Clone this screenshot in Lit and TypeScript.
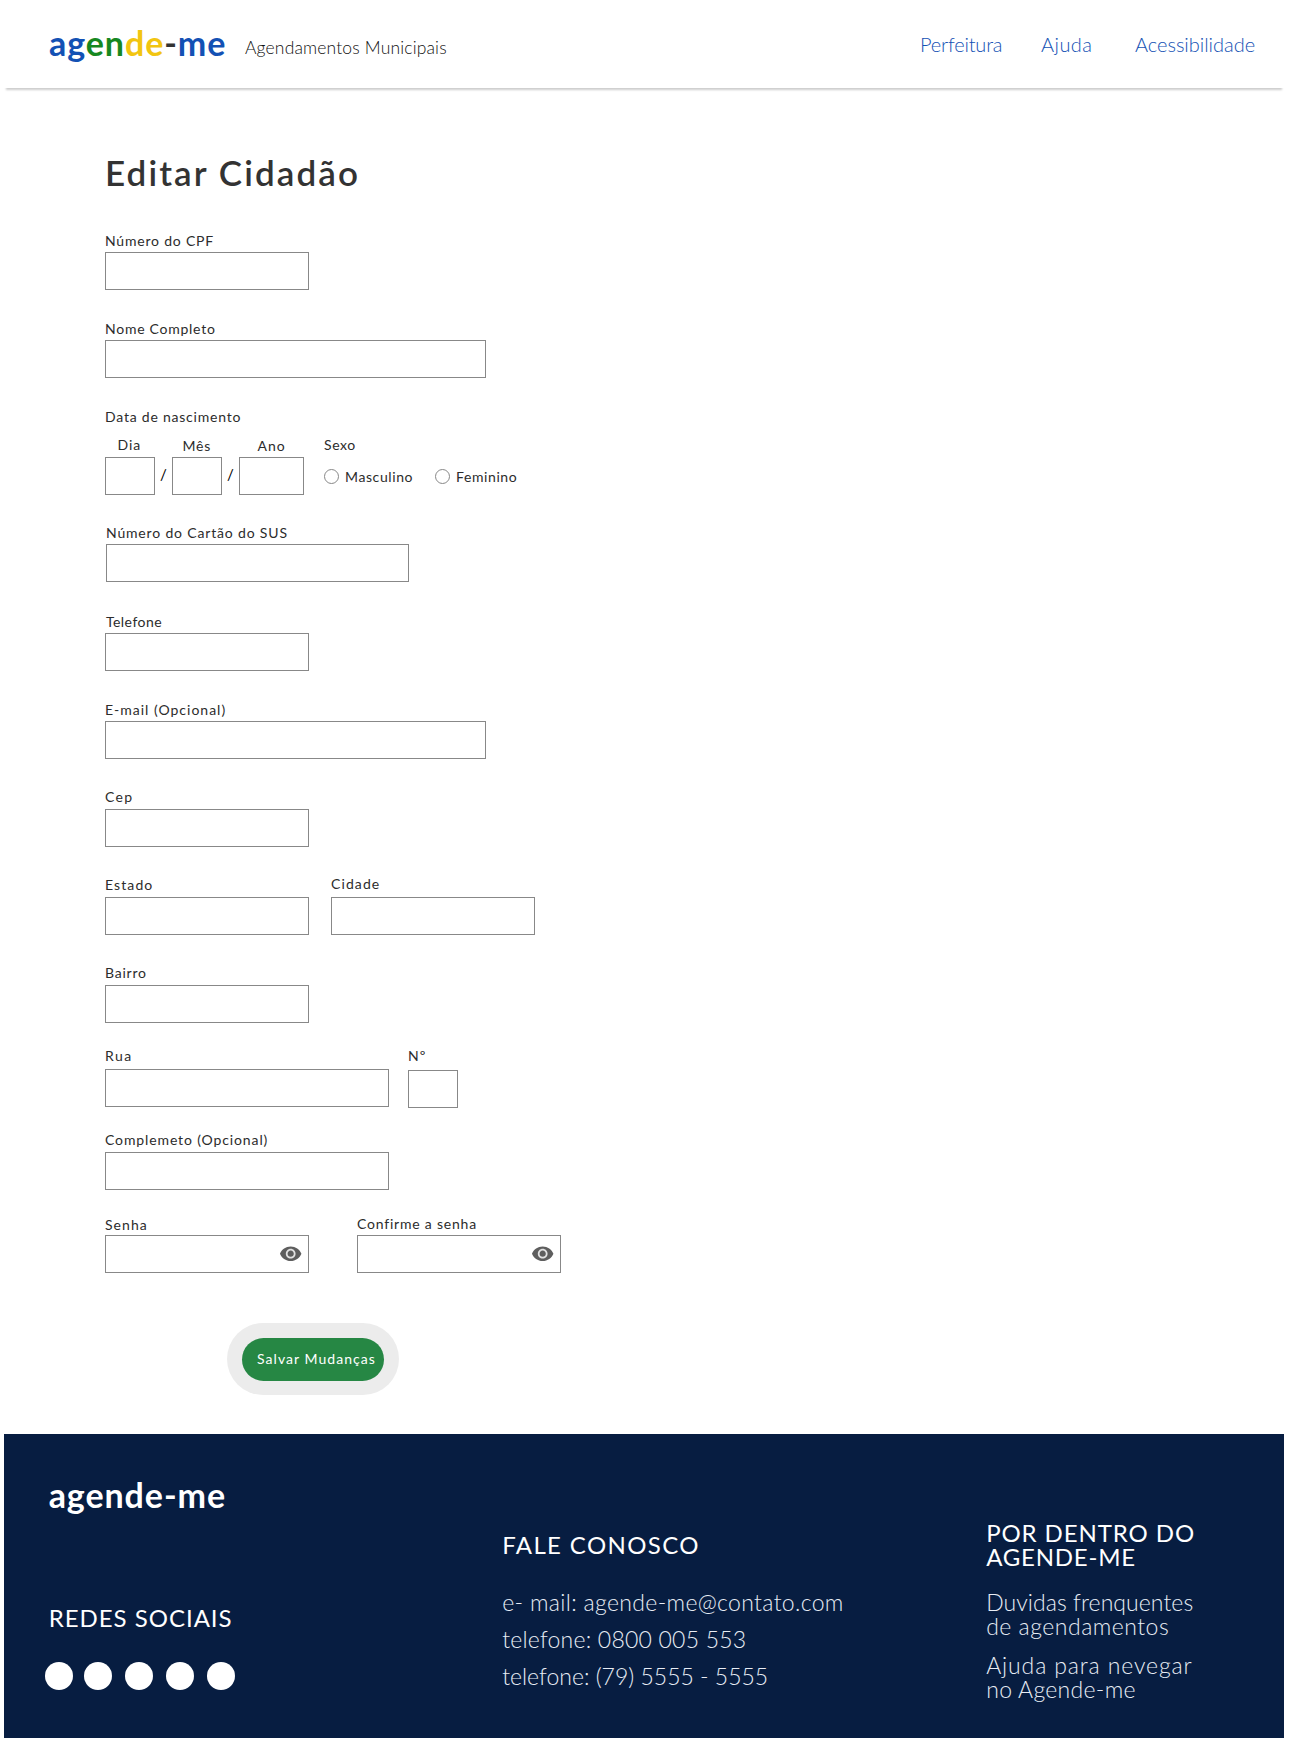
import { LitElement, html, css } from 'lit';
import { customElement, property } from 'lit/decorators.js';

const fontStack = css`Lato, "Open Sans", sans-serif`;

@customElement('eye-icon')
class EyeIcon extends LitElement {
  static styles = css`
    :host { display: block; width: 23.4px; height: 23.4px; }
    svg { display: block; width: 100%; height: 100%; }
  `;
  render() {
    return html`<svg viewBox="0 0 24 24" aria-hidden="true">
      <circle cx="12" cy="12" r="6" fill="#e2e2e2"></circle>
      <path fill="#5e5e5e" d="M12 4.5C7 4.5 2.73 7.61 1 12c1.73 4.39 6 7.5 11 7.5s9.27-3.11 11-7.5c-1.73-4.39-6-7.5-11-7.5zM12 17c-2.76 0-5-2.24-5-5s2.24-5 5-5 5 2.24 5 5-2.24 5-5 5zm0-8.2c-1.77 0-3.2 1.43-3.2 3.2s1.43 3.2 3.2 3.2 3.2-1.43 3.2-3.2-1.43-3.2-3.2-3.2z"></path>
    </svg>`;
  }
}

@customElement('form-field')
class FormField extends LitElement {
  @property() label = '';
  @property({ type: Boolean }) secret = false;
  static styles = css`
    :host { display: flex; flex-direction: column; }
    label {
      box-sizing: border-box;
      height: var(--label-h, 20px);
      padding: 1px 0 0 var(--indent, 0px);
      line-height: 16px;
      font-size: 14px;
      color: #2c2c2c;
      white-space: pre;
      letter-spacing: var(--track, 0.8px);
    }
    .box {
      display: flex;
      align-items: center;
      box-sizing: border-box;
      height: 38px;
      border: 1px solid #888;
      padding-right: 6px;
      background: #fff;
    }
    input { flex: 1; min-width: 0; border: 0; outline: 0; background: none; font: inherit; padding: 0 8px; }
  `;
  render() {
    return html`
      <label>${this.label}</label>
      <div class="box">
        <input type=${this.secret ? 'password' : 'text'} aria-label=${this.label} />
        ${this.secret ? html`<eye-icon></eye-icon>` : ''}
      </div>
    `;
  }
}

@customElement('app-header')
class AppHeader extends LitElement {
  static styles = css`
    :host {
      display: flex;
      box-sizing: border-box;
      height: 88px;
      padding: 0 30px 0 45px;
      background: #fff;
      box-shadow: 0 4px 2px -2px rgba(0, 0, 0, 0.2);
    }
    .logo { margin-top: 23px; width: 196px; font-size: 34px; line-height: 40px; font-weight: 700; letter-spacing: 0.92px; white-space: pre; }
    .blue { color: #1351b4; }
    .green { color: #168821; }
    .yellow { color: #f2c511; }
    .dash { color: #333; }
    .sub { margin-top: 36.5px; font-size: 17.5px; line-height: 22px; font-weight: 300; letter-spacing: 0.15px; color: #111; white-space: pre; }
    nav { margin: 32.3px 0 0 auto; display: grid; grid-template-columns: 121px 94px 119px; font-size: 20px; line-height: 24px; font-weight: 300; }
    a { color: #1351b4; text-decoration: none; white-space: pre; }
    .n1 { letter-spacing: -0.18px; }
    .n2 { letter-spacing: 0.45px; }
    .n3 { letter-spacing: -0.03px; }
  `;
  render() {
    return html`
      <div class="logo"><span class="blue">ag</span><span class="green">en</span><span class="yellow">de</span><span class="dash">-</span><span class="blue">me</span></div>
      <div class="sub">Agendamentos Municipais</div>
      <nav><a class="n1">Perfeitura</a><a class="n2">Ajuda</a><a class="n3">Acessibilidade</a></nav>
    `;
  }
}

@customElement('app-footer')
class AppFooter extends LitElement {
  static styles = css`
    :host {
      display: grid;
      grid-template-columns: 453.5px 484px 1fr;
      box-sizing: border-box;
      height: 304px;
      padding-left: 44.7px;
      background: #071d41;
      color: #fff;
      font-size: 23px;
      font-weight: 300;
      line-height: 24px;
      white-space: nowrap;
    }
    h2, h3, p, ul { margin: 0; padding: 0; list-style: none; }
    h2 { margin-top: 41px; font-size: 34px; line-height: 40px; font-weight: 700; letter-spacing: 0.92px; }
    h3 { font-size: 24px; line-height: 24px; font-weight: 400; }
    h3 span, p span { display: block; }
    .redes { margin-top: 91px; letter-spacing: 0.98px; }
    .dots { display: flex; gap: 13px; margin: 32px 0 0 -3.7px; }
    .dots li { width: 28px; height: 28px; border-radius: 50%; background: #fff; }
    .dots li:first-child { margin-right: -2px; }
    .fale { margin-top: 98.7px; letter-spacing: 1.38px; }
    .contact { margin-top: 27.3px; line-height: 37px; color: #e8edf5; }
    .c1 { letter-spacing: 0.34px; }
    .c2 { letter-spacing: 0.22px; }
    .c3 { letter-spacing: 0; }
    .por { margin-top: 86.7px; }
    .p1 { letter-spacing: 0.9px; }
    .p2 { letter-spacing: 0.78px; }
    .link { margin-top: 21.5px; color: #e8edf5; }
    .link + .link { margin-top: 15px; }
    .l1 { letter-spacing: 0.07px; }
    .l2 { letter-spacing: 0.5px; }
    .l3 { letter-spacing: 0.88px; }
    .l4 { letter-spacing: 0.3px; }
  `;
  render() {
    return html`
      <section>
        <h2>agende-me</h2>
        <h3 class="redes">REDES SOCIAIS</h3>
        <ul class="dots"><li></li><li></li><li></li><li></li><li></li></ul>
      </section>
      <section>
        <h3 class="fale">FALE CONOSCO</h3>
        <ul class="contact">
          <li class="c1">e- mail: agende-me@contato.com</li>
          <li class="c2">telefone: 0800 005 553</li>
          <li class="c3">telefone: (79) 5555 - 5555</li>
        </ul>
      </section>
      <section>
        <h3 class="por"><span class="p1">POR DENTRO DO</span><span class="p2">AGENDE-ME</span></h3>
        <p class="link"><span class="l1">Duvidas frenquentes</span><span class="l2">de agendamentos</span></p>
        <p class="link"><span class="l3">Ajuda para nevegar</span><span class="l4">no Agende-me</span></p>
      </section>
    `;
  }
}

@customElement('app-root')
class AppRoot extends LitElement {
  static styles = css`
    :host { display: block; box-sizing: border-box; height: 1738px; padding: 0 5px 0 4px; background: #fff; font-family: ${fontStack}; overflow: hidden; font-variant-ligatures: none; }
    main { box-sizing: border-box; height: 1346px; padding: 62px 0 0 101px; display: flex; flex-direction: column; align-items: flex-start; }
    h1 { margin: 0 0 37px; font-size: 35px; line-height: 45px; font-weight: 600; letter-spacing: 2.1px; color: #333; white-space: pre; }
    .row { display: flex; align-items: flex-end; }
    .top { align-items: flex-start; }
    .w50 { width: 50px; }
    .w65 { width: 65px; }
    .w204 { width: 204px; }
    .w284 { width: 284px; }
    .w303 { width: 303px; }
    .w381 { width: 381px; }
    .m23 { margin-top: 23px; }
    .m24 { margin-top: 24px; }
    .m25 { margin-top: 25px; }
    .m28 { margin-top: 28px; }
    .m29 { margin-top: 29px; }
    .m30 { margin-top: 30px; }
    .nome { --track: 0.74px; }
    .sus { margin-left: 1px; --indent: 0px; --track: 0.83px; }
    .tel { margin-top: 31px; --track: 0.45px; --indent: 1px; }
    .email { --track: 1px; }
    .cep { --label-h: 21px; --track: 1.3px; }
    .estado { --label-h: 21px; --track: 1.1px; }
    .cidade { --label-h: 22px; --track: 1.1px; margin-left: 22px; }
    .bairro { --label-h: 21px; --track: 0.76px; }
    .rua { --label-h: 22px; --track: 1.5px; }
    .num { --label-h: 23px; --track: 1px; margin-left: 19px; }
    .comp { --label-h: 21px; --track: 0.88px; }
    .senha { --label-h: 19px; --track: 1.05px; }
    .conf { --label-h: 20px; --track: 0.79px; margin-left: 48px; }
    .caption { box-sizing: border-box; height: 28px; padding-top: 1px; font-size: 14px; line-height: 16px; letter-spacing: 0.78px; color: #2c2c2c; }
    .dia { --label-h: 21px; --indent: 12.5px; --track: 0.9px; }
    .mes { --label-h: 20px; --indent: 10.5px; --track: 0.8px; }
    .ano { --label-h: 20px; --indent: 18.5px; --track: 1px; }
    .slash { width: 17px; height: 38px; line-height: 35px; text-align: center; font-size: 15px; color: #000; }
    .sexo { height: 58px; margin-left: 20px; font-size: 14px; line-height: 16px; color: #2c2c2c; letter-spacing: 0.6px; }
    .options { display: flex; margin-top: 16px; }
    .opt { display: flex; align-items: center; gap: 6px; width: 111px; }
    .opt input { appearance: none; box-sizing: border-box; width: 15px; height: 15px; margin: -1px 0 0; border: 1px solid #888; border-radius: 50%; background: #fff; }
    .ring { margin: 50px 0 0 122px; padding: 14.5px 15px; border-radius: 36px; background: #ececec; }
    button { display: block; width: 142px; height: 43px; padding: 0 0 2px 7px; border: 0; border-radius: 22px; background: #268744; color: #fff; font: 14px/41px ${fontStack}; letter-spacing: 1.05px; white-space: nowrap; }
  `;
  render() {
    return html`
      <app-header></app-header>
      <main>
        <h1>Editar Cidadão</h1>
        <form-field class="w204" label="Número do CPF"></form-field>
        <form-field class="w381 m30 nome" label="Nome Completo"></form-field>
        <div class="caption m30">Data de nascimento</div>
        <div class="row">
          <form-field class="w50 dia" label="Dia"></form-field>
          <span class="slash">/</span>
          <form-field class="w50 mes" label="Mês"></form-field>
          <span class="slash">/</span>
          <form-field class="w65 ano" label="Ano"></form-field>
          <div class="sexo">
            <div>Sexo</div>
            <div class="options">
              <label class="opt"><input type="radio" name="sexo" />Masculino</label>
              <label class="opt"><input type="radio" name="sexo" />Feminino</label>
            </div>
          </div>
        </div>
        <form-field class="w303 m29 sus" label="Número do Cartão do SUS"></form-field>
        <form-field class="w204 tel" label="Telefone"></form-field>
        <form-field class="w381 m30 email" label="E-mail (Opcional)"></form-field>
        <form-field class="w204 m29 cep" label="Cep"></form-field>
        <div class="row m28">
          <form-field class="w204 estado" label="Estado"></form-field>
          <form-field class="w204 cidade" label="Cidade"></form-field>
        </div>
        <form-field class="w204 m29 bairro" label="Bairro"></form-field>
        <div class="row top m24">
          <form-field class="w284 rua" label="Rua"></form-field>
          <form-field class="w50 num" label="Nº"></form-field>
        </div>
        <form-field class="w284 m23 comp" label="Complemeto (Opcional)"></form-field>
        <div class="row m25">
          <form-field class="w204 senha" label="Senha" secret></form-field>
          <form-field class="w204 conf" label="Confirme a senha" secret></form-field>
        </div>
        <div class="ring"><button type="button">Salvar Mudanças</button></div>
      </main>
      <app-footer></app-footer>
    `;
  }
}
